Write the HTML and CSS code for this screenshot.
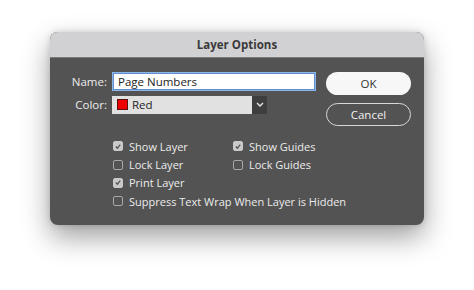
FILE: index.html
```html
<!DOCTYPE html>
<html>
<head>
<meta charset="utf-8">
<link rel="stylesheet" href="styles.css">
</head>
<body>
<div class="dialog">
  <div class="titlebar">Layer Options</div>
  <div class="content">
    <div class="form">
      <div class="row">
        <span class="label">Name:</span>
        <div class="textfield">Page Numbers</div>
      </div>
      <div class="row row-color">
        <span class="label">Color:</span>
        <div class="select">
          <span class="swatch"></span>
          <span class="select-text">Red</span>
          <span class="select-arrow">
            <svg width="8" height="5" viewBox="0 0 8 5"><path d="M1 1 L4 4 L7 1" fill="none" stroke="#e6e6e6" stroke-width="1.4"/></svg>
          </span>
        </div>
      </div>
      <div class="checks">
        <label class="check"><span class="box on"><svg width="9" height="9" viewBox="0 0 9 9"><path d="M2 4.6 L3.8 6.4 L7 2.4" fill="none" stroke="#555" stroke-width="1.5"/></svg></span>Show Layer</label>
        <label class="check"><span class="box on"><svg width="9" height="9" viewBox="0 0 9 9"><path d="M2 4.6 L3.8 6.4 L7 2.4" fill="none" stroke="#555" stroke-width="1.5"/></svg></span>Show Guides</label>
        <label class="check"><span class="box"></span>Lock Layer</label>
        <label class="check"><span class="box"></span>Lock Guides</label>
        <label class="check"><span class="box on"><svg width="9" height="9" viewBox="0 0 9 9"><path d="M2 4.6 L3.8 6.4 L7 2.4" fill="none" stroke="#555" stroke-width="1.5"/></svg></span>Print Layer</label>
        <span></span>
        <label class="check wide"><span class="box"></span>Suppress Text Wrap When Layer is Hidden</label>
      </div>
    </div>
    <div class="buttons">
      <div class="btn btn-ok">OK</div>
      <div class="btn btn-cancel">Cancel</div>
    </div>
  </div>
</div>
</body>
</html>
```

FILE: styles.css
```css
html, body {
  margin: 0;
  padding: 0;
  background: #ffffff;
}
body {
  width: 474px;
  height: 290px;
  overflow: hidden;
  font-family: "Open Sans", "DejaVu Sans", sans-serif;
  font-size: 11px;
  color: #ececec;
}
.dialog {
  margin: 32px 0 0 50px;
  width: 374px;
  height: 193px;
  border-radius: 8px;
  overflow: hidden;
  background: #535353;
  box-shadow: 0 12px 28px rgba(0, 0, 0, 0.38), 0 0 6px rgba(0, 0, 0, 0.15);
}
.titlebar {
  height: 26px;
  background: #d1d1d3;
  color: #3a3a3a;
  font-weight: 700;
  font-size: 11.5px;
  display: flex;
  align-items: center;
  justify-content: center;
  border-bottom: 1px solid #7a7a7a;
  box-sizing: border-box;
}
.content {
  display: flex;
  padding: 14px 13px 0 0;
}
.form {
  flex: 1;
  min-width: 0;
}
.row {
  display: flex;
  align-items: center;
  height: 19px;
}
.row-color {
  margin-top: 4px;
}
.label {
  width: 57px;
  margin-right: 5px;
  text-align: right;
  font-size: 11.5px;
}
.textfield {
  width: 204px;
  height: 19px;
  box-sizing: border-box;
  background: #ffffff;
  border: 1px solid #8fb6e8;
  box-shadow: 0 0 0 1px #5f8fcf inset;
  color: #222;
  font-size: 11.5px;
  padding-left: 5px;
  display: flex;
  align-items: center;
}
.select {
  width: 155px;
  height: 18px;
  display: flex;
  align-items: center;
  background: #e1e1e1;
  color: #222;
  font-size: 11.5px;
  box-sizing: border-box;
}
.swatch {
  width: 9px;
  height: 9px;
  margin: 0 4px 0 5px;
  background: #ee0000;
  border: 1px solid #5a1010;
}
.select-text {
  flex: 1;
}
.select-arrow {
  width: 15px;
  height: 18px;
  background: #3e3e3e;
  display: flex;
  align-items: center;
  justify-content: center;
}
.checks {
  margin: 23px 0 0 63px;
  display: grid;
  grid-template-columns: 120px auto;
  grid-auto-rows: 18.4px;
  align-items: center;
}
.check {
  display: flex;
  align-items: center;
  white-space: nowrap;
  font-size: 11px;
}
.wide {
  grid-column: 1 / 3;
}
.box {
  width: 10px;
  height: 10px;
  box-sizing: border-box;
  border: 1px solid #a8a8a8;
  border-radius: 2px;
  margin-right: 6px;
  display: flex;
  align-items: center;
  justify-content: center;
}
.box.on {
  background: #c9c9c9;
  border-color: #c9c9c9;
}
.buttons {
  width: 85px;
  flex-shrink: 0;
  display: flex;
  flex-direction: column;
  gap: 8px;
}
.btn {
  height: 23px;
  box-sizing: border-box;
  border-radius: 12px;
  display: flex;
  align-items: center;
  justify-content: center;
  font-size: 11.5px;
}
.btn-ok {
  background: #f7f7f7;
  color: #333;
}
.btn-cancel {
  border: 1px solid #d8d8d8;
  color: #f0f0f0;
}
```
